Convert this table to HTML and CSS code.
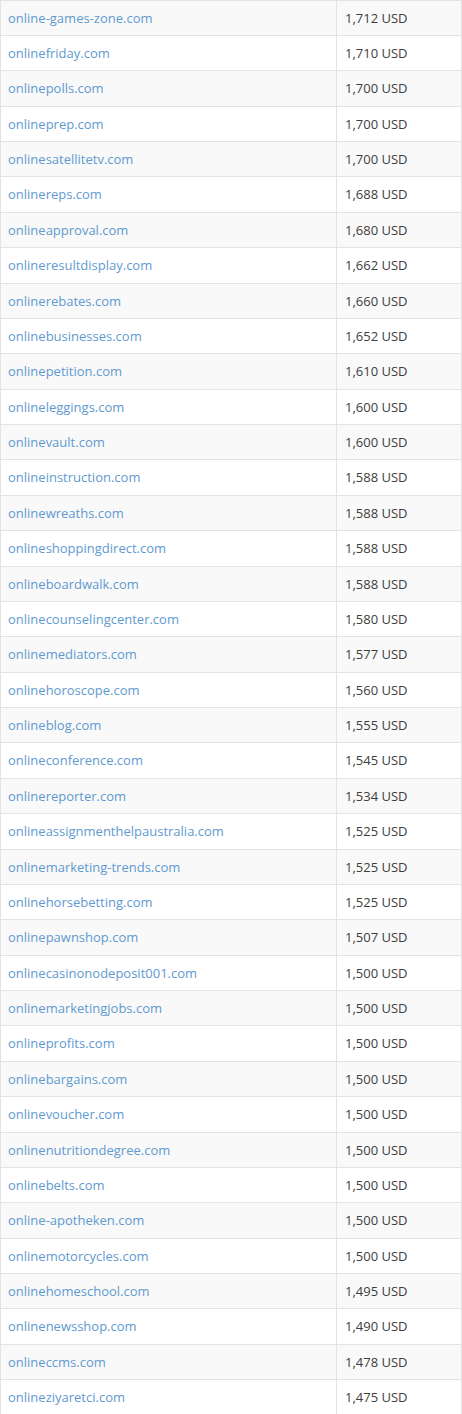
FILE: index.html
```html
<!DOCTYPE html>
<html>
<head>
<meta charset="utf-8">
<link rel="stylesheet" href="styles.css">
</head>
<body>
<table class="domains">
<tbody>
<tr><td class="name"><a href="#">online-games-zone.com</a></td><td class="price">1,712 USD</td></tr>
<tr><td class="name"><a href="#">onlinefriday.com</a></td><td class="price">1,710 USD</td></tr>
<tr><td class="name"><a href="#">onlinepolls.com</a></td><td class="price">1,700 USD</td></tr>
<tr><td class="name"><a href="#">onlineprep.com</a></td><td class="price">1,700 USD</td></tr>
<tr><td class="name"><a href="#">onlinesatellitetv.com</a></td><td class="price">1,700 USD</td></tr>
<tr><td class="name"><a href="#">onlinereps.com</a></td><td class="price">1,688 USD</td></tr>
<tr><td class="name"><a href="#">onlineapproval.com</a></td><td class="price">1,680 USD</td></tr>
<tr><td class="name"><a href="#">onlineresultdisplay.com</a></td><td class="price">1,662 USD</td></tr>
<tr><td class="name"><a href="#">onlinerebates.com</a></td><td class="price">1,660 USD</td></tr>
<tr><td class="name"><a href="#">onlinebusinesses.com</a></td><td class="price">1,652 USD</td></tr>
<tr><td class="name"><a href="#">onlinepetition.com</a></td><td class="price">1,610 USD</td></tr>
<tr><td class="name"><a href="#">onlineleggings.com</a></td><td class="price">1,600 USD</td></tr>
<tr><td class="name"><a href="#">onlinevault.com</a></td><td class="price">1,600 USD</td></tr>
<tr><td class="name"><a href="#">onlineinstruction.com</a></td><td class="price">1,588 USD</td></tr>
<tr><td class="name"><a href="#">onlinewreaths.com</a></td><td class="price">1,588 USD</td></tr>
<tr><td class="name"><a href="#">onlineshoppingdirect.com</a></td><td class="price">1,588 USD</td></tr>
<tr><td class="name"><a href="#">onlineboardwalk.com</a></td><td class="price">1,588 USD</td></tr>
<tr><td class="name"><a href="#">onlinecounselingcenter.com</a></td><td class="price">1,580 USD</td></tr>
<tr><td class="name"><a href="#">onlinemediators.com</a></td><td class="price">1,577 USD</td></tr>
<tr><td class="name"><a href="#">onlinehoroscope.com</a></td><td class="price">1,560 USD</td></tr>
<tr><td class="name"><a href="#">onlineblog.com</a></td><td class="price">1,555 USD</td></tr>
<tr><td class="name"><a href="#">onlineconference.com</a></td><td class="price">1,545 USD</td></tr>
<tr><td class="name"><a href="#">onlinereporter.com</a></td><td class="price">1,534 USD</td></tr>
<tr><td class="name"><a href="#">onlineassignmenthelpaustralia.com</a></td><td class="price">1,525 USD</td></tr>
<tr><td class="name"><a href="#">onlinemarketing-trends.com</a></td><td class="price">1,525 USD</td></tr>
<tr><td class="name"><a href="#">onlinehorsebetting.com</a></td><td class="price">1,525 USD</td></tr>
<tr><td class="name"><a href="#">onlinepawnshop.com</a></td><td class="price">1,507 USD</td></tr>
<tr><td class="name"><a href="#">onlinecasinonodeposit001.com</a></td><td class="price">1,500 USD</td></tr>
<tr><td class="name"><a href="#">onlinemarketingjobs.com</a></td><td class="price">1,500 USD</td></tr>
<tr><td class="name"><a href="#">onlineprofits.com</a></td><td class="price">1,500 USD</td></tr>
<tr><td class="name"><a href="#">onlinebargains.com</a></td><td class="price">1,500 USD</td></tr>
<tr><td class="name"><a href="#">onlinevoucher.com</a></td><td class="price">1,500 USD</td></tr>
<tr><td class="name"><a href="#">onlinenutritiondegree.com</a></td><td class="price">1,500 USD</td></tr>
<tr><td class="name"><a href="#">onlinebelts.com</a></td><td class="price">1,500 USD</td></tr>
<tr><td class="name"><a href="#">online-apotheken.com</a></td><td class="price">1,500 USD</td></tr>
<tr><td class="name"><a href="#">onlinemotorcycles.com</a></td><td class="price">1,500 USD</td></tr>
<tr><td class="name"><a href="#">onlinehomeschool.com</a></td><td class="price">1,495 USD</td></tr>
<tr><td class="name"><a href="#">onlinenewsshop.com</a></td><td class="price">1,490 USD</td></tr>
<tr><td class="name"><a href="#">onlineccms.com</a></td><td class="price">1,478 USD</td></tr>
<tr><td class="name"><a href="#">onlineziyaretci.com</a></td><td class="price">1,475 USD</td></tr>
</tbody>
</table>
</body>
</html>
```
FILE: styles.css
```css
html, body {
  margin: 0;
  padding: 0;
  background: #ffffff;
}
body {
  font-family: "Open Sans", "Liberation Sans", sans-serif;
  font-size: 13px;
  color: #3d3d3d;
}
.domains {
  border-collapse: collapse;
  width: 462px;
  margin: -0.4px 0 0 0;
  table-layout: fixed;
}
.domains td {
  border: 1px solid #e3e3e3;
  padding: 8px;
  line-height: 18.37px;
  height: 18.37px;
  white-space: nowrap;
  vertical-align: middle;
}
.domains tr:nth-child(odd) td {
  background: #f9f9f9;
}
.domains .name {
  width: 320px;
  padding-left: 7px;
}
.domains .price {
  width: 108px;
}
.domains a {
  color: #5f9ad0;
  text-decoration: none;
}
```
